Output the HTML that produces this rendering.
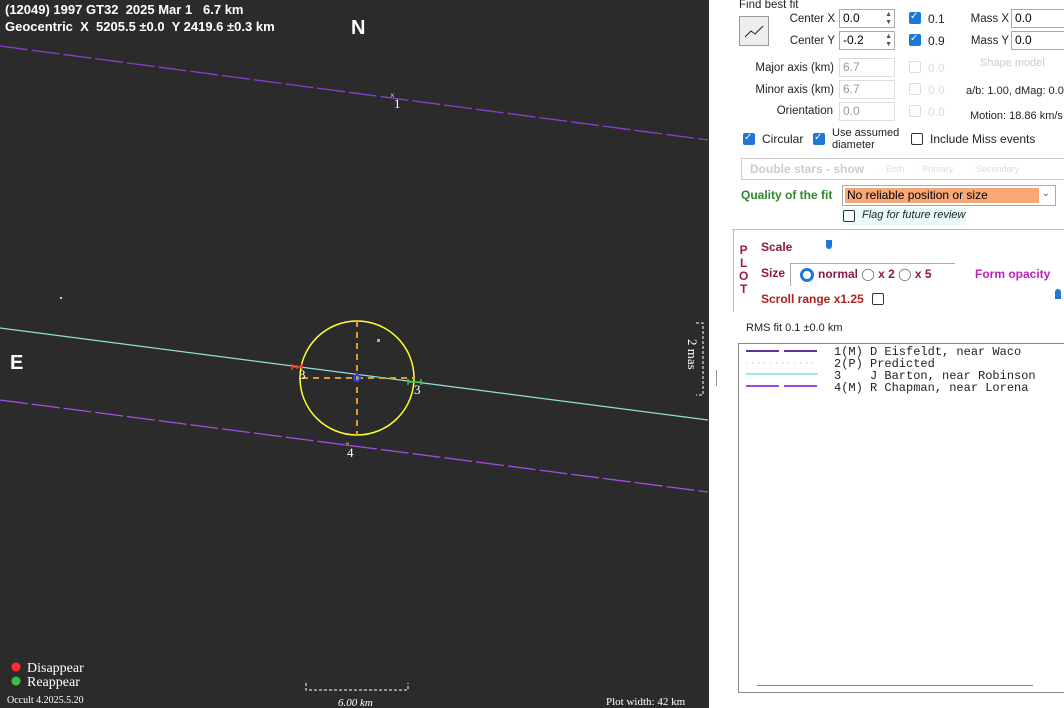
<!DOCTYPE html>
<html><head><meta charset="utf-8"><style>
body{margin:0;width:1064px;height:708px;overflow:hidden;background:#fff;font-family:"Liberation Sans",sans-serif;position:relative}
.a{position:absolute;white-space:nowrap}
.s{font-size:12px;color:#222}
.r{position:absolute;white-space:nowrap;font-size:11.5px;color:#222;text-align:right}
.box{position:absolute;border:1px solid #aaa;background:#fff;font-size:12px;height:19px;box-sizing:border-box;padding:1px 3px}
.sp{position:absolute;right:2px;top:1px;font-size:7px;line-height:8px;color:#555}
.cb{position:absolute;width:12px;height:12px;border-radius:2px;box-sizing:border-box}
.on{background:#1e78d7}
.on:after{content:"✓";color:#fff;font-size:10px;position:absolute;left:1px;top:-1px}
.off{border:1px solid #333;background:#fff}
.dis{border:1px solid #ddd}
.g{color:#999}
text{white-space:pre}
</style></head><body>
<svg class="a" style="left:0;top:0" width="709" height="708">
<rect width="709" height="708" fill="#2b2b2b"/>
<line x1="0" y1="46" x2="708" y2="140" stroke="#8a3fd0" stroke-width="1.3" stroke-dasharray="28,4"/>
<line x1="0" y1="328" x2="708" y2="420" stroke="#8fe0dc" stroke-width="1.3"/>
<line x1="0" y1="400" x2="708" y2="492" stroke="#a64ce6" stroke-width="1.3" stroke-dasharray="28,4"/>
<circle cx="357" cy="378" r="57" fill="none" stroke="#ffff30" stroke-width="1.5"/>
<line x1="357" y1="321" x2="357" y2="435" stroke="#e09a30" stroke-width="2" stroke-dasharray="6,5"/>
<line x1="302" y1="378" x2="413" y2="378" stroke="#e09a30" stroke-width="2" stroke-dasharray="6,5"/>
<circle cx="357" cy="378" r="3" fill="none" stroke="#2040ff" stroke-width="2"/>
<rect x="377" y="339" width="3" height="3" fill="#e090b0"/>
<rect x="60" y="297" width="2" height="2" fill="#ccc"/>
<path d="M292 367h10M292 364v6M302 364v6M297 365v4" stroke="#ff3030" stroke-width="1.5" fill="none"/>
<path d="M408 382h14M408 379v6M421 379v6" stroke="#3ec03e" stroke-width="1.5" fill="none"/>
<text x="390" y="98" fill="#ccc" font-size="8">×</text>
<text x="345" y="447" fill="#ccc" font-size="8">×</text>
<g font-family="Liberation Serif" fill="#fff" font-size="13">
<text x="394" y="108">1</text><text x="299" y="379">3</text><text x="414" y="394">3</text><text x="347" y="457">4</text>
</g>
<text x="5" y="14" fill="#fff" font-size="13" font-weight="bold" xml:space="preserve">(12049) 1997 GT32  2025 Mar 1   6.7 km</text>
<text x="5" y="31" fill="#fff" font-size="13" font-weight="bold" xml:space="preserve">Geocentric  X  5205.5 ±0.0  Y 2419.6 ±0.3 km</text>
<text x="351" y="34" fill="#fff" font-size="20" font-weight="bold">N</text>
<text x="10" y="369" fill="#fff" font-size="20" font-weight="bold">E</text>
<path d="M696 323h7v72h-7" stroke="#fff" stroke-dasharray="3,2" fill="none"/>
<text transform="translate(688,339) rotate(90)" fill="#fff" font-family="Liberation Serif" font-size="13">2 mas</text>
<circle cx="16" cy="667" r="4.5" fill="#ff3030"/><circle cx="16" cy="681" r="4.5" fill="#3ec03e"/>
<g font-family="Liberation Serif" fill="#fff"><text x="27" y="672" font-size="14">Disappear</text><text x="27" y="686" font-size="14">Reappear</text>
<text x="7" y="703" font-size="10">Occult 4.2025.5.20</text>
<text x="338" y="706" font-size="11" font-style="italic">6.00 km</text>
<text x="606" y="705" font-size="11">Plot width: 42 km</text></g>
<path d="M306 683v7h102v-7" stroke="#fff" stroke-dasharray="3,2" fill="none"/>
</svg>
<div class="a" style="left:716px;top:370px;width:1px;height:16px;background:#999"></div>
<div class="a s" style="left:739px;top:-1px;font-size:11.5px">Find best fit</div>
<div class="a" style="left:739px;top:16px;width:30px;height:30px;border:1px solid #999;background:#eee;box-sizing:border-box"><svg width="28" height="28"><path d="M5 20l6-6 4 3 8-8" stroke="#222" fill="none"/></svg></div>
<div class="r" style="right:229px;top:13px">Center X</div><div class="box" style="left:839px;top:9px;width:56px">0.0<span class="sp">▲<br>▼</span></div>
<div class="r" style="right:229px;top:35px">Center Y</div><div class="box" style="left:839px;top:31px;width:56px">-0.2<span class="sp">▲<br>▼</span></div>
<div class="cb on" style="left:909px;top:12px"></div><div class="a s" style="left:928px;top:12px">0.1</div>
<div class="cb on" style="left:909px;top:34px"></div><div class="a s" style="left:928px;top:34px">0.9</div>
<div class="r" style="right:55px;top:13px">Mass X</div><div class="box" style="left:1011px;top:9px;width:60px">0.0</div>
<div class="r" style="right:55px;top:35px">Mass Y</div><div class="box" style="left:1011px;top:31px;width:60px">0.0</div>
<div class="r" style="right:230px;top:62px">Major axis (km)</div><div class="box g" style="left:839px;top:58px;width:56px;border-color:#ddd">6.7</div>
<div class="r" style="right:230px;top:84px">Minor axis (km)</div><div class="box g" style="left:839px;top:80px;width:56px;border-color:#ddd">6.7</div>
<div class="r" style="right:231px;top:105px">Orientation</div><div class="box g" style="left:839px;top:102px;width:56px;border-color:#ddd">0.0</div>
<div class="cb dis" style="left:909px;top:61px"></div><div class="a s g" style="left:928px;top:61px;color:#ddd">0.0</div>
<div class="cb dis" style="left:909px;top:83px"></div><div class="a s g" style="left:928px;top:83px;color:#ddd">0.0</div>
<div class="cb dis" style="left:909px;top:105px"></div><div class="a s g" style="left:928px;top:105px;color:#ddd">0.0</div>
<div class="a s" style="left:980px;top:57px;color:#ccc;font-size:11px">Shape model</div>
<div class="a s" style="left:966px;top:85px;font-size:11px">a/b: 1.00, dMag: 0.00</div>
<div class="a s" style="left:970px;top:110px;font-size:11px">Motion: 18.86 km/s</div>
<div class="cb on" style="left:743px;top:133px"></div><div class="a s" style="left:762px;top:132px">Circular</div>
<div class="cb on" style="left:813px;top:133px"></div><div class="a s" style="left:832px;top:127px;font-size:11px;line-height:12px">Use assumed<br>diameter</div>
<div class="cb off" style="left:911px;top:133px"></div><div class="a s" style="left:930px;top:132px">Include Miss events</div>
<div class="a" style="left:741px;top:158px;width:330px;height:20px;border:1px solid #ccc;border-right:none"></div>
<div class="a s" style="left:750px;top:162px;color:#ccc;font-weight:bold">Double stars - show</div>
<div class="a s" style="left:878px;top:164px;color:#ddd;font-size:9px">◌ Both &nbsp; &nbsp;◌ Primary &nbsp; &nbsp; &nbsp;◌ Secondary</div>
<div class="a" style="left:741px;top:188px;font-size:12px;font-weight:bold;color:#2a8a2a">Quality of the fit</div>
<div class="a" style="left:842px;top:185px;width:214px;height:21px;border:1px solid #aaa;box-sizing:border-box;background:#fff"><div style="position:absolute;left:2px;top:2px;width:192px;height:15px;background:#f7a878;font-size:12px;line-height:15px;padding-left:2px">No reliable position or size</div><span style="position:absolute;right:5px;top:2px;font-size:10px;color:#666">⌄</span></div>
<div class="a" style="left:842px;top:208px;width:124px;height:17px;background:#e8fafa"></div>
<div class="cb off" style="left:843px;top:210px"></div><div class="a s" style="left:862px;top:209px;font-style:italic;font-size:11px">Flag for future review</div>
<div class="a" style="left:732px;top:229px;width:332px;height:1px;background:#bbb"></div>
<div class="a" style="left:733px;top:230px;width:1px;height:82px;background:#bbb"></div>
<div class="a" style="left:739px;top:244px;font-size:12px;font-weight:bold;color:#a01850;line-height:13px;text-align:center">P<br>L<br>O<br>T</div>
<div class="a" style="left:761px;top:240px;font-size:12px;font-weight:bold;color:#8a1848">Scale</div>
<div class="a" style="left:826px;top:240px;width:6px;height:9px;background:#1e78d7;border-radius:0 0 3px 3px"></div>
<div class="a" style="left:761px;top:266px;font-size:12px;font-weight:bold;color:#8a1848">Size</div>
<div class="a" style="left:790px;top:263px;width:164px;height:22px;border-top:1px solid #aaa;border-left:1px solid #aaa"></div>
<div class="a" style="left:800px;top:268px;width:8px;height:8px;border:3px solid #1e78d7;border-radius:50%"></div>
<div class="a" style="left:818px;top:267px;font-size:12px;font-weight:bold;color:#8a1848">normal <span style="font-weight:normal;color:#666">◯</span> x 2 <span style="font-weight:normal;color:#666">◯</span> x 5</div>
<div class="a" style="left:975px;top:267px;font-size:12px;font-weight:bold;color:#c020c0">Form opacity</div>
<div class="a" style="left:761px;top:292px;font-size:12px;font-weight:bold;color:#b02020">Scroll range x1.25</div>
<div class="cb off" style="left:872px;top:293px"></div>
<div class="a" style="left:1055px;top:289px;width:6px;height:10px;background:#1e78d7;border-radius:3px 3px 0 0"></div>
<div class="a s" style="left:746px;top:322px;font-size:11px">RMS fit 0.1 ±0.0 km</div>
<div class="a" style="left:738px;top:343px;width:330px;height:350px;border:1px solid #888;border-right:none;box-sizing:border-box;background:#fff"></div>
<svg class="a" style="left:744px;top:345px" width="90" height="48">
<path d="M2 6h33M40 6h33" stroke="#6030a0" stroke-width="2"/>
<path d="M2 18h70" stroke="#e090c0" stroke-dasharray="1,5"/>
<path d="M2 29h72" stroke="#a0e8e8" stroke-width="2"/>
<path d="M2 41h33M40 41h33" stroke="#a048e0" stroke-width="2"/>
</svg>
<div class="a" style="left:834px;top:346px;font-family:'Liberation Mono',monospace;font-size:12px;line-height:12px;color:#222;white-space:pre">1(M) D Eisfeldt, near Waco
2(P) Predicted
3    J Barton, near Robinson
4(M) R Chapman, near Lorena</div>
<div class="a" style="left:757px;top:685px;width:276px;height:1px;background:#888"></div>
</body></html>
